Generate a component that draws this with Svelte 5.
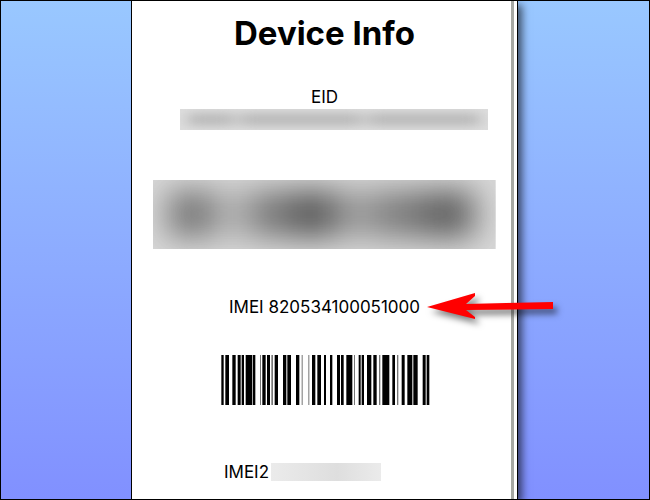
<script lang="ts">
  const eid = 'EID';
  const imei = 'IMEI 820534100051000';

  const bars: [number, number][] = [
    [1, 7], [13, 11], [34, 10], [50, 9], [62, 7], [74, 20], [96, 7],
    [117, 3], [124, 10], [138, 9], [151, 5], [161, 10], [186, 10], [199, 11],
    [225, 10], [242, 3], [262, 3], [273, 10], [289, 11], [309, 6], [327, 7],
    [348, 9], [360, 8], [376, 18], [399, 3], [413, 6], [422, 7], [438, 13],
    [457, 10], [474, 4], [484, 21], [514, 8], [528, 4], [542, 9], [559, 15],
    [577, 13], [605, 9], [617, 8]
  ];
</script>

<main class="backdrop">
  <section class="panel">
    <h1>Device Info</h1>
    <p class="label">{eid}</p>
    <div class="redacted eid-value">
      <svg viewBox="0 0 308 21" preserveAspectRatio="none" aria-hidden="true">
        <defs>
          <filter id="soft-small" x="-20%" y="-80%" width="140%" height="260%" color-interpolation-filters="sRGB">
            <feGaussianBlur stdDeviation="8 5" />
          </filter>
        </defs>
        <rect width="308" height="21" fill="#dedede" />
        <g filter="url(#soft-small)" fill="#b9b9b9">
          <rect x="8" y="4" width="46" height="13" />
          <rect x="60" y="4" width="122" height="13" />
          <rect x="188" y="4" width="112" height="13" />
        </g>
      </svg>
    </div>
    <div class="redacted eid-code">
      <svg viewBox="0 0 342 69" preserveAspectRatio="none" aria-hidden="true">
        <defs>
          <filter id="soft-large" x="-30%" y="-100%" width="160%" height="300%" color-interpolation-filters="sRGB">
            <feGaussianBlur stdDeviation="17 15" />
          </filter>
        </defs>
        <rect width="342" height="69" fill="#d8d8d8" />
        <g filter="url(#soft-large)" opacity="0.9">
          <rect x="16" y="10" width="42" height="48" fill="#686868" />
          <rect x="58" y="10" width="42" height="48" fill="#b0b0b0" />
          <rect x="100" y="10" width="44" height="48" fill="#6e6e6e" />
          <rect x="144" y="10" width="36" height="48" fill="#484848" />
          <rect x="180" y="10" width="46" height="48" fill="#969696" />
          <rect x="226" y="10" width="46" height="48" fill="#747474" />
          <rect x="272" y="10" width="48" height="48" fill="#525252" />
        </g>
      </svg>
    </div>
    <p class="label imei">{imei}</p>
    <svg class="barcode" viewBox="0 0 627 150" role="img" aria-label="IMEI barcode">
      {#each bars as [x, width]}
        <rect {x} y="0" {width} height="150" fill={width < 6 ? '#777' : '#000'} />
      {/each}
    </svg>
    <div class="second">
      <span>IMEI2</span>
      <span class="imei2-value"></span>
    </div>

    <svg class="arrow" viewBox="0 0 160 60" aria-hidden="true">
      <path d="M17 27 L65 13 V16 L56 24 L143 22 V29 L56 30 L65 37 V39 Z" />
    </svg>
  </section>
</main>

<style>
  :global(body) {
    margin: 0;
  }

  .backdrop {
    box-sizing: border-box;
    display: grid;
    grid-template-columns: 130fr 387fr 131fr;
    min-height: 100vh;
    border: 1px solid #000;
    background: linear-gradient(#99c8ff, #8190ff);
    overflow: hidden;
  }

  .panel {
    grid-column: 2;
    position: relative;
    display: flex;
    flex-direction: column;
    align-items: center;
    border: solid #000;
    border-width: 0 1px;
    background:
      linear-gradient(#a6a8a4, #a6a8a4) right 3px top / 3px 100% no-repeat,
      #fff;
    box-shadow: 4px 4px 8px rgba(0, 0, 0, 0.6);
    clip-path: inset(0 -60px 0 0);
    color: #000;
    font-family: Inter, 'Liberation Sans', sans-serif;
    font-size: 17px;
    line-height: 20px;
  }

  h1 {
    margin: 12px 0 0;
    font-size: 33px;
    font-weight: 700;
    line-height: 40px;
  }

  .label {
    margin: 34px 0 0;
  }

  .redacted {
    overflow: hidden;
  }

  .redacted svg {
    display: block;
    width: 100%;
    height: 100%;
  }

  .eid-value {
    width: 80%;
    height: 21px;
    margin-top: 2px;
    margin-left: 18px;
  }

  .eid-code {
    width: 89%;
    height: 69px;
    margin-top: 50px;
  }

  .imei {
    margin-top: 48px;
  }

  .barcode {
    width: 209px;
    height: 50px;
    margin: 38px 0 0 2px;
  }

  .second {
    display: flex;
    align-items: center;
    gap: 2px;
    margin: 57px 44px 0 0;
  }

  .imei2-value {
    width: 110px;
    height: 18px;
    background: linear-gradient(90deg, #ebebeb, #dedede 60%, #ebebeb);
  }

  .arrow {
    position: absolute;
    top: 279px;
    left: 278px;
    width: 160px;
    height: 60px;
    fill: #f00;
    filter: drop-shadow(4px 5px 3px rgba(0, 0, 0, 0.5));
  }
</style>
